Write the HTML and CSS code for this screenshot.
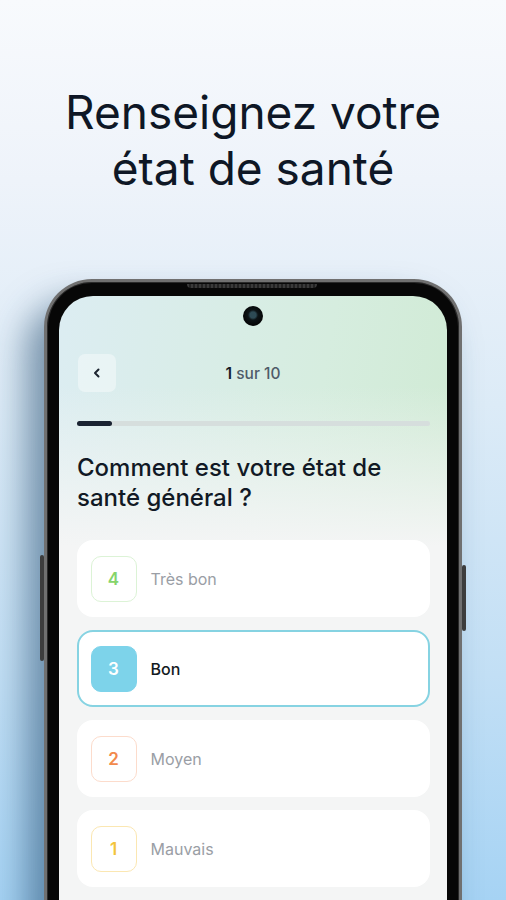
FILE: index.html
```html
<!DOCTYPE html>
<html lang="fr">
<head>
<meta charset="utf-8">
<title>Renseignez votre état de santé</title>
<link rel="stylesheet" href="styles.css">
</head>
<body>
<h1 class="title">Renseignez votre<br>état de santé</h1>
<div class="phone">
  <span class="side-btn side-left"></span>
  <span class="side-btn side-right"></span>
  <span class="speaker"></span>
  <div class="screen">
    <div class="camera"></div>
    <div class="topbar">
      <button class="back" aria-label="Retour">
        <svg width="10" height="12" viewBox="0 0 10 12"><path d="M6.5 2.5 L3 6 L6.5 9.5" fill="none" stroke="#1d2430" stroke-width="2" stroke-linecap="round" stroke-linejoin="round"/></svg>
      </button>
      <div class="counter"><b>1</b> sur 10</div>
      <span class="spacer"></span>
    </div>
    <div class="progress"><div class="fill" style="width:10%"></div></div>
    <h2 class="question">Comment est votre état de<br>santé général ?</h2>
    <ul class="options">
      <li class="option"><span class="num num-green">4</span><span class="label">Très bon</span></li>
      <li class="option selected"><span class="num num-blue">3</span><span class="label">Bon</span></li>
      <li class="option"><span class="num num-orange">2</span><span class="label">Moyen</span></li>
      <li class="option"><span class="num num-yellow">1</span><span class="label">Mauvais</span></li>
    </ul>
  </div>
</div>
</body>
</html>
```

FILE: styles.css
```css
* { box-sizing: border-box; }
html, body { margin: 0; padding: 0; }
body {
  width: 506px;
  height: 900px;
  overflow: hidden;
  font-family: Inter, "Noto Sans", sans-serif;
  background: linear-gradient(180deg, #f8fafd 0%, #eef3fa 20%, #dcebf7 45%, #c2dff5 75%, #a6d3f4 100%);
}
.title {
  margin: 84px 0 0;
  font-size: 46px;
  line-height: 56px;
  font-weight: 400;
  text-align: center;
  color: #0e1726;
  letter-spacing: 0;
}
.phone {
  position: relative;
  margin: 83px 0 0 44px;
  width: 418px;
  height: 680px;
  border: 3px solid #707070;
  border-bottom: 0;
  border-radius: 48px 48px 0 0;
  background: #070707;
  padding: 14px 12px 0;
  box-shadow: -18px 22px 34px rgba(35, 75, 110, 0.55), inset 0 0 0 1px #2a2a2a;
}
.side-btn {
  position: absolute;
  width: 4px;
  background: #3d3d3d;
  border-radius: 2px;
}
.side-left { left: -7px; top: 273px; height: 106px; }
.side-right { right: -7px; top: 283px; height: 66px; }
.speaker {
  position: absolute;
  left: 140px;
  top: 2px;
  width: 130px;
  height: 4px;
  border-radius: 0 0 4px 4px;
  background: repeating-linear-gradient(90deg, #3a3a3a 0 2px, #222 2px 4px);
}
.screen {
  height: 100%;
  border-radius: 34px 34px 0 0;
  padding: 10px 18px 0;
  background:
    linear-gradient(180deg, rgba(244,245,245,0) 0px, rgba(244,245,245,0) 90px, #f4f5f5 250px),
    linear-gradient(100deg, #dcedf2 0%, #d6eddf 55%, #cde9cf 100%);
}
.camera {
  width: 20px;
  height: 20px;
  margin: 0 auto;
  border-radius: 50%;
  background: radial-gradient(circle at 50% 45%, #2d4a55 0 3px, #0d1417 5px, #050607 10px);
}
.topbar {
  margin-top: 28px;
  display: flex;
  align-items: center;
  height: 38px;
}
.back {
  width: 38px;
  height: 38px;
  margin-left: 1px;
  border: 0;
  padding: 0;
  border-radius: 7px;
  background: rgba(255, 255, 255, 0.4);
  display: flex;
  align-items: center;
  justify-content: center;
}
.counter {
  flex: 1;
  text-align: center;
  font-size: 15.5px;
  font-weight: 500;
  color: #4f5b69;
}
.counter b { color: #151c28; font-weight: 600; }
.spacer { width: 39px; }
.progress {
  margin-top: 29px;
  height: 5px;
  border-radius: 3px;
  background: #d6dedd;
  width: 353px;
}
.fill {
  height: 100%;
  border-radius: 3px;
  background: #1a2332;
}
.question {
  margin: 27px 0 0;
  font-size: 24px;
  line-height: 30px;
  font-weight: 500;
  color: #111925;
  letter-spacing: 0;
}
.options {
  list-style: none;
  margin: 27px 0 0;
  padding: 0;
  display: flex;
  flex-direction: column;
  gap: 13px;
  width: 353px;
}
.option {
  height: 77px;
  display: flex;
  align-items: center;
  gap: 14px;
  padding-left: 11.5px;
  background: #fff;
  border: 2px solid transparent;
  border-radius: 16px;
}
.option.selected { border-color: #86d3e2; }
.num {
  width: 46px;
  height: 46px;
  border-radius: 10px;
  border: 1.5px solid;
  display: flex;
  align-items: center;
  justify-content: center;
  font-size: 17px;
  font-weight: 600;
}
.num-green { border-color: #dcf3d6; color: #86d46b; }
.num-blue { border-color: #7dd3ea; background: #7dd3ea; color: #fff; }
.num-orange { border-color: #fcdccc; color: #f28a4c; }
.num-yellow { border-color: #fbe7b2; color: #f3c43c; }
.label {
  font-size: 16px;
  color: #9a9ea5;
}
.selected .label { color: #141a22; font-weight: 500; }
```
